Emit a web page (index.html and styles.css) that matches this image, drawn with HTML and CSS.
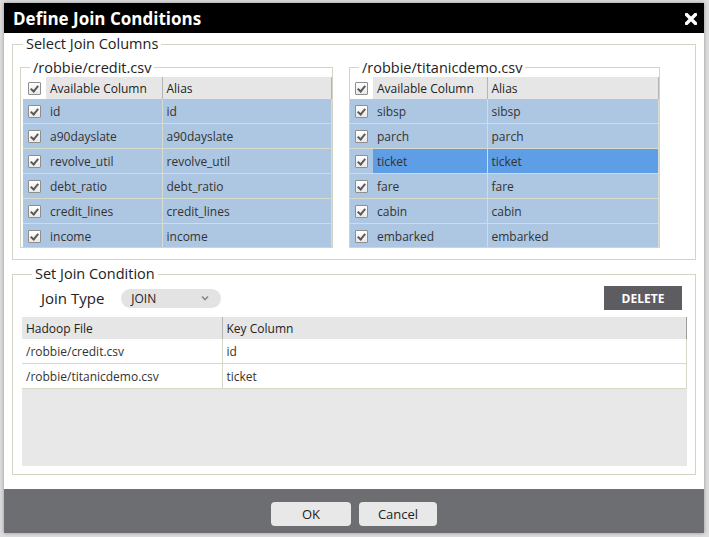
FILE: index.html
```html
<!DOCTYPE html>
<html>
<head>
<meta charset="utf-8">
<title>Define Join Conditions</title>
<link rel="stylesheet" href="styles.css">
</head>
<body>
<div class="dialog">
  <div class="titlebar">
    <span class="title">Define Join Conditions</span>
    <svg class="close" width="12" height="12" viewBox="0 0 12 12"><path d="M1.5 1.5 L10.5 10.5 M10.5 1.5 L1.5 10.5" stroke="#fff" stroke-width="3.4" stroke-linecap="square"/></svg>
  </div>
  <div class="content">
    <fieldset class="group cols">
      <legend>Select Join Columns</legend>
      <div class="pair">
        <fieldset class="file file-left">
          <legend>/robbie/credit.csv</legend>
          <div class="scroll">
            <table class="grid">
              <colgroup><col class="c-cb"><col class="c-name-l"><col></colgroup>
              <thead><tr><th class="cbcell"><span class="cb"></span></th><th>Available Column</th><th>Alias</th></tr></thead>
              <tbody>
                <tr><td class="cbcell"><span class="cb"></span></td><td>id</td><td>id</td></tr>
                <tr><td class="cbcell"><span class="cb"></span></td><td>a90dayslate</td><td>a90dayslate</td></tr>
                <tr><td class="cbcell"><span class="cb"></span></td><td>revolve_util</td><td>revolve_util</td></tr>
                <tr><td class="cbcell"><span class="cb"></span></td><td>debt_ratio</td><td>debt_ratio</td></tr>
                <tr><td class="cbcell"><span class="cb"></span></td><td>credit_lines</td><td>credit_lines</td></tr>
                <tr><td class="cbcell"><span class="cb"></span></td><td>income</td><td>income</td></tr>
              </tbody>
            </table>
          </div>
        </fieldset>
        <fieldset class="file file-right">
          <legend>/robbie/titanicdemo.csv</legend>
          <div class="scroll">
            <table class="grid">
              <colgroup><col class="c-cb"><col class="c-name-r"><col></colgroup>
              <thead><tr><th class="cbcell"><span class="cb"></span></th><th>Available Column</th><th>Alias</th></tr></thead>
              <tbody>
                <tr><td class="cbcell"><span class="cb"></span></td><td>sibsp</td><td>sibsp</td></tr>
                <tr><td class="cbcell"><span class="cb"></span></td><td>parch</td><td>parch</td></tr>
                <tr class="selected"><td class="cbcell"><span class="cb"></span></td><td>ticket</td><td>ticket</td></tr>
                <tr><td class="cbcell"><span class="cb"></span></td><td>fare</td><td>fare</td></tr>
                <tr><td class="cbcell"><span class="cb"></span></td><td>cabin</td><td>cabin</td></tr>
                <tr><td class="cbcell"><span class="cb"></span></td><td>embarked</td><td>embarked</td></tr>
              </tbody>
            </table>
          </div>
        </fieldset>
      </div>
    </fieldset>
    <fieldset class="group cond">
      <legend>Set Join Condition</legend>
      <div class="toolbar">
        <span class="label">Join Type</span>
        <span class="select">JOIN<svg class="chev" width="8" height="6" viewBox="0 0 8 6"><path d="M1 1.5 L4 4.5 L7 1.5" fill="none" stroke="#8a8a8a" stroke-width="1.6"/></svg></span>
        <span class="delete">DELETE</span>
      </div>
      <div class="keys">
        <table class="keygrid">
          <colgroup><col class="c-file"><col></colgroup>
          <thead><tr><th>Hadoop File</th><th>Key Column</th></tr></thead>
          <tbody>
            <tr><td>/robbie/credit.csv</td><td>id</td></tr>
            <tr><td>/robbie/titanicdemo.csv</td><td>ticket</td></tr>
          </tbody>
        </table>
      </div>
    </fieldset>
  </div>
  <div class="footer">
    <span class="btn btn-ok">OK</span>
    <span class="btn btn-cancel">Cancel</span>
  </div>
</div>
</body>
</html>
```

FILE: styles.css
```css
html, body {
  margin: 0;
  height: 100%;
}
body {
  background: #dedede;
  padding: 3px 0 0 4px;
  box-sizing: border-box;
  overflow: hidden;
  font-family: "Open Sans", "DejaVu Sans", sans-serif;
  color: #333;
}
.dialog {
  width: 700px;
  height: 530px;
  background: #fff;
  display: flex;
  flex-direction: column;
  box-shadow: 0 0 4px rgba(0,0,0,0.35);
}
.titlebar {
  height: 30px;
  flex: none;
  background: #000;
  color: #fff;
  display: flex;
  align-items: center;
  justify-content: space-between;
  padding: 0 7px 0 9px;
}
.title {
  font-weight: 700;
  font-size: 17px;
  line-height: 20px;
  padding-top: 1px;
}
.close {
  display: block;
  margin-top: 1px;
}
.content {
  flex: 1;
  padding: 2px 8px 0;
}
fieldset {
  margin: 0;
  min-width: 0;
  border: 1px solid #d3d4c4;
}
legend {
  font-size: 14.5px;
  line-height: 18px;
  padding: 0 3px;
  margin-left: 10px;
  color: #222;
}
.group {
  padding: 5px 0 11px;
}
.cols .pair {
  display: grid;
  grid-template-columns: 313px 311px;
  column-gap: 16px;
  padding-left: 7px;
}
.file {
  padding: 0;
}
.file legend {
  line-height: 19px;
  margin-left: 9px;
}
.file-left .scroll {
  padding-left: 2px;
}
.scroll {
  height: 170px;
  overflow: hidden;
}
.grid {
  border-collapse: collapse;
  width: 100%;
  table-layout: fixed;
  font-size: 12px;
}
.c-cb { width: 23px; }
.c-name-l { width: 116px; }
.c-name-r { width: 114px; }
.grid th {
  height: 22px;
  padding: 0 4px;
  background: #e6e6e6;
  font-weight: 400;
  text-align: left;
  color: #222;
  border-right: 1px solid #b5b5b5;
  white-space: nowrap;
}
.grid th.cbcell {
  background: #fff;
  border-right: 0;
}
.grid td {
  height: 24px;
  padding: 0 4px;
  background: #adc6e2;
  color: #333;
  border-bottom: 1px solid #d8dccf;
  border-right: 1px solid #d8dccf;
  white-space: nowrap;
}
.grid tr.selected td {
  background: #5e9ee6;
}
.grid tr.selected td.cbcell {
  background: #adc6e2;
}
.grid .cbcell {
  padding: 0 0 0 5px;
  border-right: 0;
}
.cb {
  display: block;
  width: 11px;
  height: 11px;
  border: 1px solid #8e8e8e;
  border-radius: 1px;
  background: linear-gradient(#ffffff, #e9e9e9);
  position: relative;
}
.cb::after {
  content: "";
  position: absolute;
  left: 3px;
  top: 1px;
  width: 3px;
  height: 6px;
  border: solid #5a5a5a;
  border-width: 0 2px 2px 0;
  transform: rotate(40deg);
}
.cond {
  margin-top: 5px;
  padding: 3px 8px 8px 9px;
}
.toolbar {
  display: flex;
  align-items: center;
  height: 24px;
  padding-left: 19px;
  padding-right: 5px;
}
.label {
  font-size: 15px;
  color: #222;
}
.select {
  margin-left: 17px;
  width: 100px;
  height: 19px;
  box-sizing: border-box;
  border-radius: 10px;
  background: #e3e3e3;
  display: flex;
  align-items: center;
  justify-content: space-between;
  padding: 0 12px 0 10px;
  font-size: 12px;
  color: #222;
}
.chev { display: block; }
.delete {
  margin-left: auto;
  width: 78px;
  height: 24px;
  background: #5d5c61;
  color: #fff;
  font-weight: 700;
  font-size: 12px;
  display: flex;
  align-items: center;
  justify-content: center;
}
.keys {
  margin-top: 7px;
  height: 149px;
  background: #e8e8e8;
}
.keygrid {
  border-collapse: collapse;
  width: 100%;
  table-layout: fixed;
  font-size: 12px;
}
.c-file { width: 200px; }
.keygrid th {
  height: 22px;
  padding: 0 4px;
  background: #e6e6e6;
  font-weight: 400;
  text-align: left;
  color: #222;
  border-right: 1px solid #b5b5b5;
}
.keygrid th:last-child {
  border-right: 1px solid #9c9c9c;
}
.keygrid td {
  height: 24px;
  padding: 0 4px;
  background: #fff;
  color: #333;
  border-bottom: 1px solid #d8d8c6;
  border-right: 1px solid #d8d8c6;
}
.footer {
  flex: none;
  margin-top: auto;
  height: 44px;
  box-sizing: border-box;
  background: #6d6e72;
  display: flex;
  justify-content: center;
  align-items: flex-start;
  padding-top: 13px;
  gap: 8px;
}
.btn {
  height: 24px;
  border-radius: 4px;
  background: #e8e8e8;
  color: #222;
  font-size: 13px;
  display: flex;
  align-items: center;
  justify-content: center;
}
.btn-ok { width: 80px; }
.btn-cancel { width: 78px; }
```
